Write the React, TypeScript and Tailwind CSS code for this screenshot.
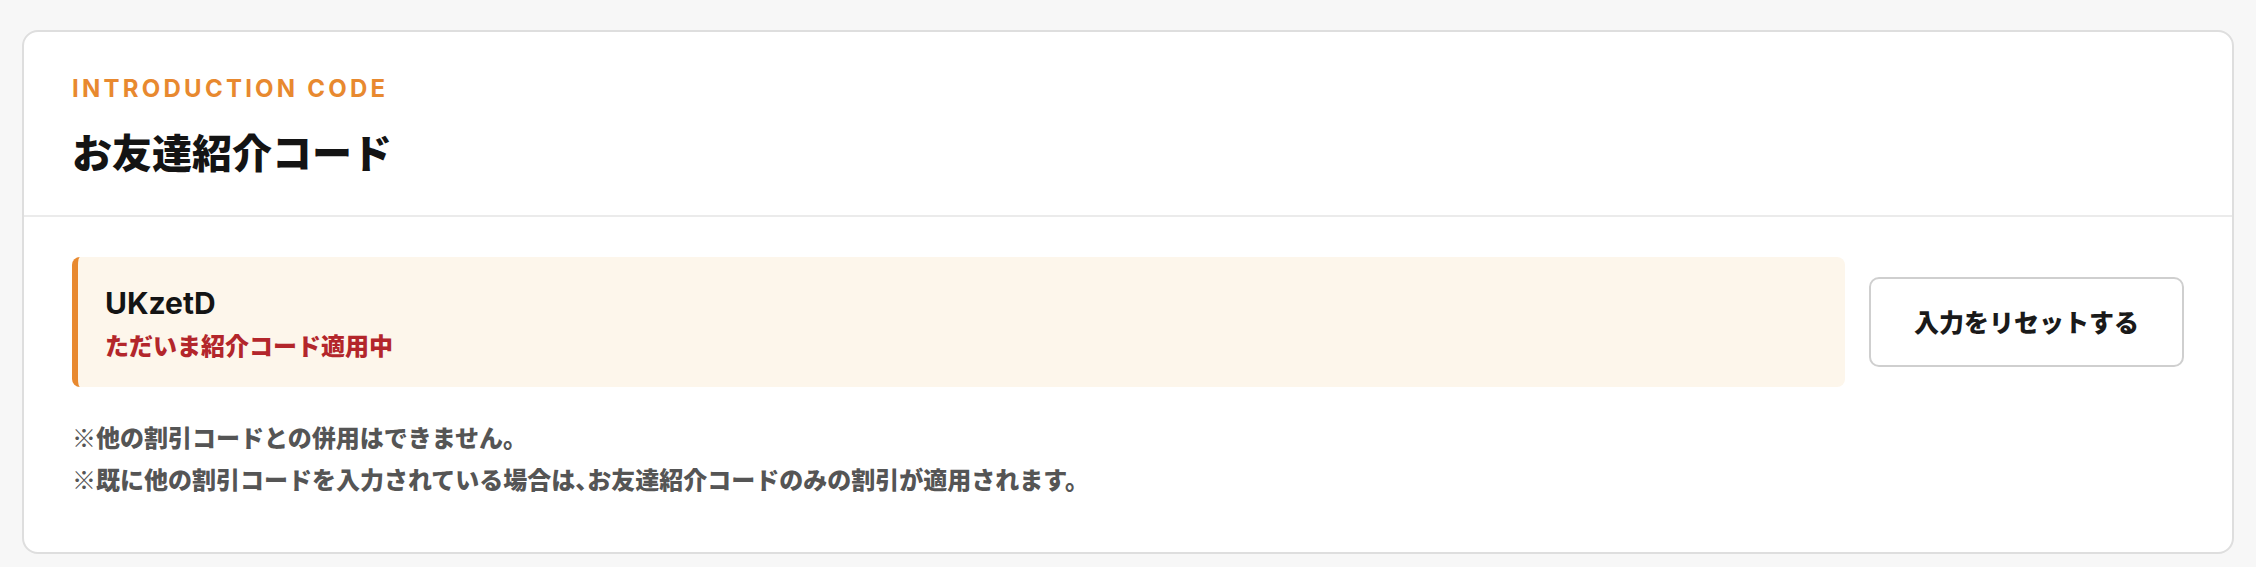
const latin = "font-['Inter','Noto_Sans_CJK_JP',sans-serif]"
const jp = "font-['Noto_Sans_CJK_JP',sans-serif]"

export default function App() {
  return (
    <div className={`min-h-[567px] bg-[#f7f7f7] px-[22px] pt-[30px] pb-[14px] ${jp}`}>
      <div className="rounded-[16px] border-2 border-[#dedede] bg-white">
        {/* header */}
        <div className="border-b-2 border-[#ebebeb] px-[48px] pt-[41px] pb-[36px]">
          <div className={`${latin} text-[24px] leading-[32px] font-bold tracking-[0.135em] text-[#e8892f]`}>
            INTRODUCTION CODE
          </div>
          <h2 className="mt-[18px] text-[40px] leading-[56px] font-black text-[#141414]">お友達紹介コード</h2>
        </div>

        {/* body */}
        <div className="px-[48px] pt-[40px] pb-[57px]">
          <div className="flex items-center gap-[24px]">
            <div className="flex h-[130px] flex-1 flex-col justify-center rounded-[8px] border-l-[6px] border-[#e8892f] bg-[#fdf6eb] pl-[27px]">
              <div className={`${latin} text-[30px] leading-[40px] font-bold text-[#141414]`}>UKzetD</div>
              <div className="mt-[6px] text-[24px] leading-[32px] font-black text-[#b3262b]">ただいま紹介コード適用中</div>
            </div>
            <button className="flex h-[90px] w-[315px] items-center justify-center rounded-[10px] border-2 border-[#cfcfcf] bg-white text-[25px] font-black text-[#1a1a1a]">
              入力をリセットする
            </button>
          </div>

          <div className="mt-[34px] space-y-[10px] text-[24px] leading-[32px] font-black text-[#555555]">
            <p>※他の割引コードとの併用はできません。</p>
            <p>
              ※既に他の割引コードを入力されている場合は<span className="[font-feature-settings:'halt']">、</span>お友達紹介コードのみの割引が適用されます。
            </p>
          </div>
        </div>
      </div>
    </div>
  )
}
